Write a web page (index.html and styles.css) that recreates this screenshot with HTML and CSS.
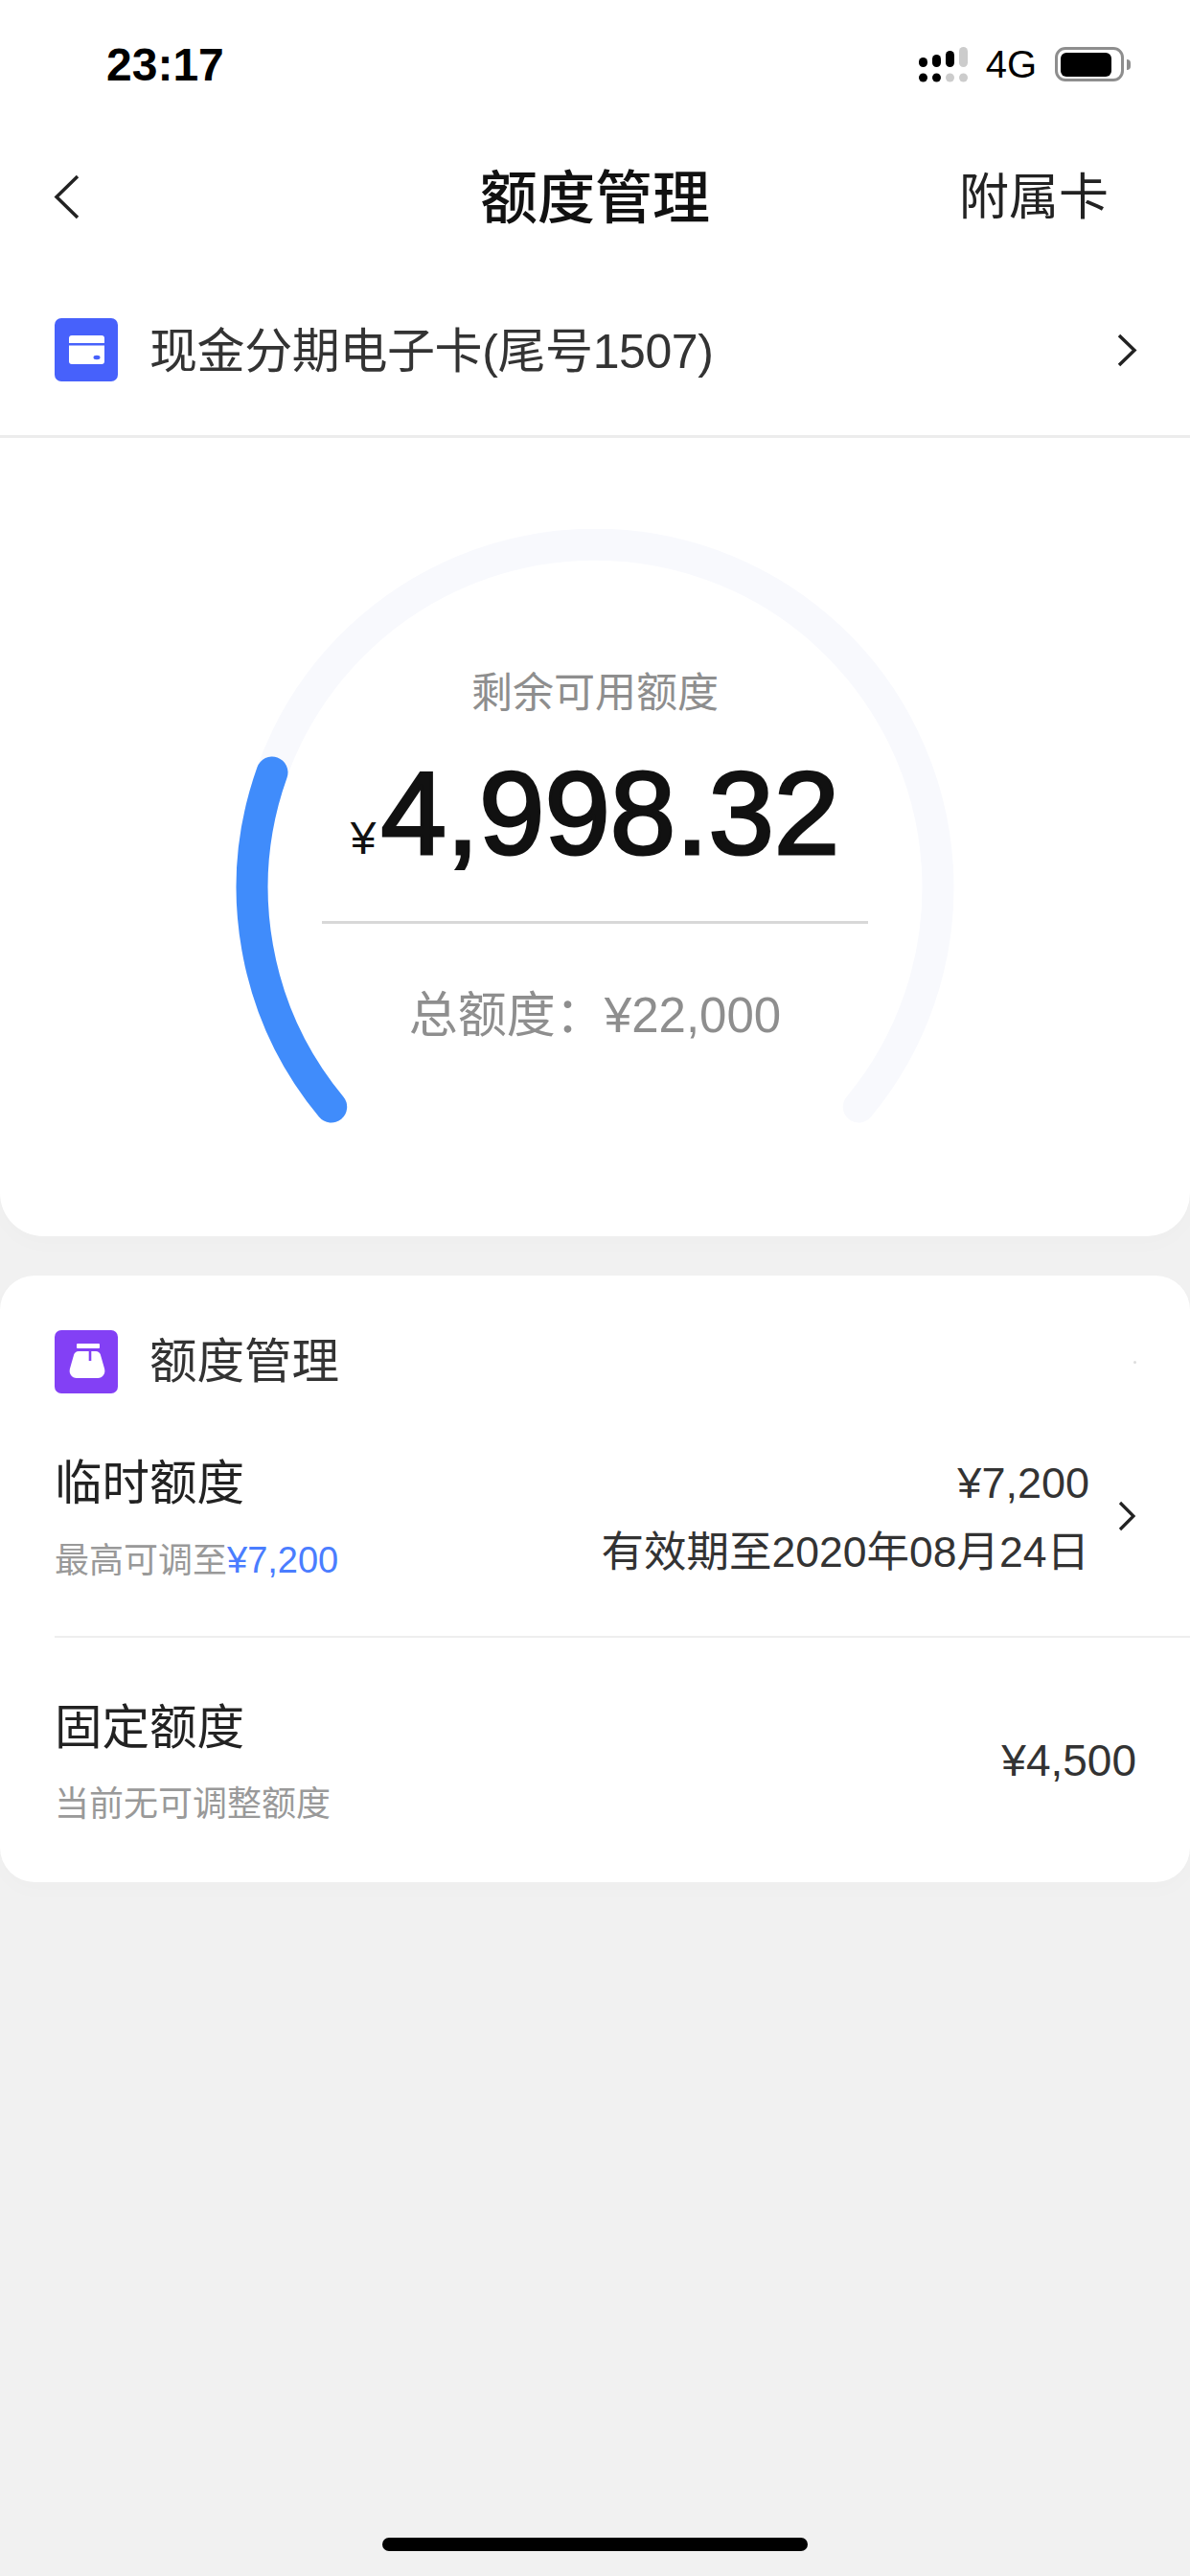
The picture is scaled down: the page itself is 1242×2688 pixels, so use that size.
FILE: index.html
```html
<!DOCTYPE html>
<html lang="zh-CN">
<head>
    <meta charset="UTF-8" />
    <meta name="viewport" content="width=device-width, initial-scale=1" />
    <title>额度管理</title>
    <link rel="stylesheet" href="styles.css">
</head>
<body>
    <div class="page">
        <div class="top">
            <div class="status-bar">
                <span class="time">23:17</span>
                <div class="status-right">
                    <svg class="signal" width="51" height="37" viewBox="0 0 51 37">
                        <rect x="0" y="11" width="9" height="10" rx="4.5" fill="#000"/>
                        <rect x="14" y="8" width="9" height="13" rx="4.5" fill="#000"/>
                        <rect x="28" y="4" width="9" height="17" rx="4.5" fill="#000"/>
                        <rect x="42" y="0" width="9" height="21" rx="4.5" fill="#ccc"/>
                        <circle cx="4.5" cy="32" r="4.5" fill="#000"/>
                        <circle cx="18.5" cy="32" r="4.5" fill="#000"/>
                        <circle cx="32.5" cy="32" r="4.5" fill="#ccc"/>
                        <circle cx="46.5" cy="32" r="4.5" fill="#ccc"/>
                    </svg>
                    <span class="network">4G</span>
                    <div class="battery">
                        <div class="battery-body"><div class="battery-level"></div></div>
                        <div class="battery-nub"></div>
                    </div>
                </div>
            </div>

            <div class="nav-bar">
                <svg class="back" width="27" height="47" viewBox="0 0 27 47">
                    <polyline points="25,2 3,23.5 25,45" fill="none" stroke="#222" stroke-width="3.5"/>
                </svg>
                <h1 class="nav-title">额度管理</h1>
                <span class="nav-action">附属卡</span>
            </div>

            <div class="card-row">
                <svg class="icon" width="66" height="66" viewBox="0 0 66 66">
                    <rect width="66" height="66" rx="7" fill="#4761fb"/>
                    <rect x="15" y="18" width="37" height="30" rx="3" fill="#fff"/>
                    <rect x="15" y="26" width="37" height="2.5" fill="#4761fb"/>
                    <ellipse cx="44" cy="41" rx="3.5" ry="2.2" fill="#4761fb"/>
                </svg>
                <span class="card-name">现金分期电子卡(尾号1507)</span>
                <svg class="chevron" width="21" height="35" viewBox="0 0 21 35">
                    <polyline points="2,2 18,17.5 2,33" fill="none" stroke="#222" stroke-width="3.5"/>
                </svg>
            </div>
        </div>

        <div class="gauge-card">
            <div class="gauge">
                <svg class="gauge-arc" width="750" height="620" viewBox="0 0 750 620">
                    <path d="M99.7 603 A358 358 0 1 1 650.3 603" fill="none" stroke="#f8f9fd" stroke-width="33" stroke-linecap="round"/>
                    <path d="M38 254 A358 358 0 0 0 99.7 603" fill="none" stroke="#408cfb" stroke-width="33" stroke-linecap="round"/>
                </svg>
                <div class="gauge-info">
                    <div class="gauge-label">剩余可用额度</div>
                    <div class="gauge-amount"><span class="yen">¥</span>4,998.32</div>
                    <div class="gauge-line"></div>
                    <div class="gauge-total">总额度：¥22,000</div>
                </div>
            </div>
        </div>

        <div class="limit-card">
            <div class="limit-header">
                <svg class="icon" width="66" height="66" viewBox="0 0 66 66">
                    <rect width="66" height="66" rx="7" fill="#8340f5"/>
                    <rect x="23" y="14" width="24" height="5" rx="1" fill="#fff"/>
                    <path d="M27 22 H43 C45.500 22 47 23.500 47.700 25 L52 40 C53.500 45.500 50 50 45 50 H23 C18 50 14.500 45.500 16 40 L20.300 25 C21 23.500 22.500 22 25 22 Z" fill="#fff"/>
                    <rect x="35.700" y="19" width="2.600" height="13" fill="#8340f5"/>
                </svg>
                <span class="limit-heading">额度管理</span>
                <span class="speck"></span>
            </div>
            <div class="limit-row">
                <div class="limit-text">
                    <div class="limit-title">临时额度</div>
                    <div class="limit-sub">最高可调至<span class="blue">¥7,200</span></div>
                </div>
                <div class="limit-values">
                    <div class="limit-value">¥7,200</div>
                    <div class="limit-date">有效期至2020年08月24日</div>
                </div>
                <svg class="chevron limit-chevron" width="19" height="32" viewBox="0 0 19 32">
                    <polyline points="2,2 16,16 2,30" fill="none" stroke="#222" stroke-width="3.2"/>
                </svg>
            </div>
            <div class="limit-line"></div>
            <div class="limit-row">
                <div class="limit-text">
                    <div class="limit-title">固定额度</div>
                    <div class="limit-sub">当前无可调整额度</div>
                </div>
                <div class="limit-amount">¥4,500</div>
            </div>
        </div>

        <div class="home-bar"></div>
    </div>
</body>
</html>
```

FILE: styles.css
```css
body {
    margin: 0;
    background-color: #f1f1f1;
    font-family: "Liberation Sans", "Noto Sans CJK SC", sans-serif;
    color: #222;
}
.page {
    display: flex;
    flex-direction: column;
    width: 1242px;
    height: 2688px;
    overflow: hidden;
}
.top {
    background: white;
    border-bottom: 3px solid #ececec;
}
.status-bar {
    display: flex;
    justify-content: space-between;
    align-items: center;
    height: 134px;
    padding: 0 62px 0 111px;
    box-sizing: border-box;
}
.time {
    font-size: 48px;
    font-weight: 700;
    color: #000;
}
.status-right {
    display: flex;
    align-items: center;
}
.signal {
    display: block;
}
.network {
    margin-left: 19px;
    font-size: 40px;
    color: #000;
}
.battery {
    display: flex;
    align-items: center;
    margin-left: 19px;
}
.battery-body {
    display: flex;
    align-items: center;
    width: 72px;
    height: 36px;
    padding: 0 3px;
    border: 3px solid #8e8e8e;
    border-radius: 11px;
    box-sizing: border-box;
}
.battery-level {
    width: 53px;
    height: 25px;
    background: #000;
    border-radius: 6px;
}
.battery-nub {
    width: 4px;
    height: 11px;
    margin-left: 3px;
    background: #8e8e8e;
    border-radius: 0 4px 4px 0;
}
.nav-bar {
    display: grid;
    grid-template-columns: 1fr auto 1fr;
    align-items: center;
    height: 142px;
    padding: 0 56px;
}
.back {
    display: block;
}
.nav-title {
    margin: 0 0 8px;
    font-size: 60px;
    font-weight: 500;
    color: #111;
}
.nav-action {
    justify-self: end;
    margin: 0 29px 8px 0;
    font-size: 52px;
    color: #222;
}
.card-row {
    display: flex;
    align-items: center;
    height: 178px;
    padding: 0 55px 0 57px;
}
.icon {
    display: block;
    flex-shrink: 0;
}
.card-name {
    flex: 1;
    margin-left: 33px;
    padding-bottom: 7px;
    font-size: 50px;
    letter-spacing: -0.4px;
    color: #333;
}
.chevron {
    display: block;
    flex-shrink: 0;
}
.gauge-card {
    background: white;
    padding: 95px 0 118px;
    border-radius: 0 0 45px 45px;
    box-shadow: 0 8px 24px rgba(0,0,0,0.015);
}
.gauge {
    display: grid;
    justify-items: center;
}
.gauge-arc {
    grid-area: 1 / 1;
    display: block;
}
.gauge-info {
    grid-area: 1 / 1;
    display: flex;
    flex-direction: column;
    align-items: center;
    padding-top: 141px;
}
.gauge-label {
    font-size: 43px;
    line-height: 60px;
    color: #8e8e8e;
}
.gauge-amount {
    margin-top: 31px;
    font-size: 123px;
    line-height: 130px;
    color: #111;
    -webkit-text-stroke: 3px #111;
}
.yen {
    margin-right: 5px;
    font-size: 48px;
    -webkit-text-stroke: 0;
}
.gauge-line {
    width: 570px;
    height: 3px;
    margin-top: 21px;
    background: #d8d8d8;
}
.gauge-total {
    margin-top: 66px;
    font-size: 51px;
    line-height: 60px;
    color: #8e8e8e;
}
.limit-card {
    margin-top: 41px;
    background: white;
    border-radius: 36px;
    padding: 57px 0 3px;
    box-shadow: 0 8px 24px rgba(0,0,0,0.015);
}
.limit-header {
    display: flex;
    align-items: center;
    padding: 0 56px 0 57px;
}
.limit-heading {
    flex: 1;
    margin-left: 33px;
    font-size: 49.5px;
    line-height: 60px;
    color: #333;
}
.speck {
    width: 3px;
    height: 3px;
    background: #ddd;
    border-radius: 50%;
}
.limit-row {
    display: flex;
    align-items: center;
    padding: 59px 56px 53px 57px;
}
.limit-text {
    flex: 1;
}
.limit-title {
    font-size: 49.5px;
    line-height: 70px;
    color: #222;
}
.limit-sub {
    margin-top: 20px;
    font-size: 36px;
    line-height: 50px;
    color: #999;
}
.blue {
    font-size: 38px;
    color: #4a7dff;
}
.limit-values {
    align-self: flex-start;
    margin-right: 30px;
    text-align: right;
}
.limit-value {
    font-size: 45px;
    line-height: 70px;
    color: #333;
}
.limit-amount {
    margin-bottom: 2px;
    font-size: 46px;
    line-height: 70px;
    color: #333;
}
.limit-date {
    margin-top: 7px;
    font-size: 44.5px;
    line-height: 60px;
    color: #333;
}
.limit-chevron {
    margin-bottom: 4px;
}
.limit-line {
    height: 2px;
    margin-left: 57px;
    background: #eee;
}
.home-bar {
    width: 444px;
    height: 14px;
    margin: auto auto 26px;
    background: #000;
    border-radius: 7px;
}
```
